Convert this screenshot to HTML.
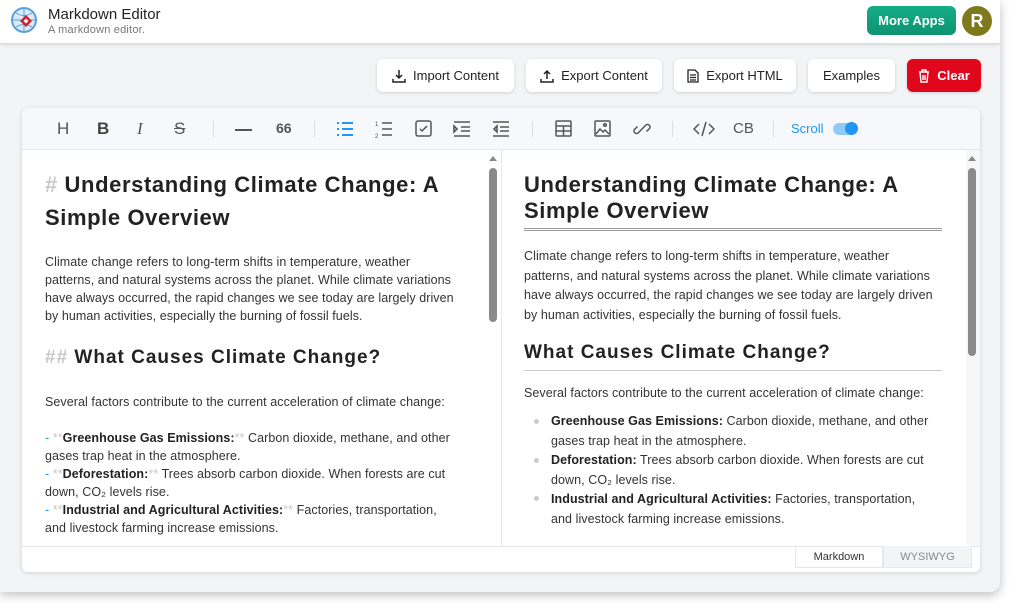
<!DOCTYPE html>
<html><head><meta charset="utf-8"><style>
*{box-sizing:border-box;margin:0;padding:0}
body{width:1024px;height:615px;background:#fff;font-family:"Liberation Sans",sans-serif;position:relative;overflow:hidden;color:#222}
.app{position:absolute;left:0;top:0;width:1000px;height:592px;background:#f3f4f6;border-radius:0 0 10px 0;box-shadow:0 3px 10px rgba(0,0,0,.25);overflow:hidden}
.hdr{position:absolute;left:0;top:0;width:1000px;height:43px;background:#fff;box-shadow:0 2px 3px rgba(0,0,0,.12)}
.a{position:absolute;white-space:nowrap}
.btn{position:absolute;top:59px;height:33px;background:#fff;border-radius:6px;box-shadow:0 1px 3px rgba(0,0,0,.15);font-size:13px;display:flex;align-items:center;justify-content:center;gap:7px;color:#222}
.card{position:absolute;left:22px;top:108px;width:958px;height:464px;background:#fff;border-radius:6px;box-shadow:0 1px 4px rgba(0,0,0,.15);overflow:hidden}
.tb{position:absolute;left:0;top:0;width:958px;height:42px;background:#f7f8fb;border-bottom:1px solid #e5e7eb}
.ic{position:absolute;top:12px}
.t{position:absolute;font-size:12.5px;letter-spacing:.07px;color:#333;white-space:nowrap;line-height:18px}
.h1{position:absolute;font-size:22px;letter-spacing:.6px;font-weight:bold;color:#222;white-space:nowrap}
.h2{position:absolute;font-size:19px;letter-spacing:1px;font-weight:bold;color:#222;white-space:nowrap}
.g{color:#c8c8c8}
b{color:#222}
.sep{position:absolute;top:13px;width:1px;height:16px;background:#ddd}
.bl{position:absolute;width:5px;height:5px;border-radius:50%;background:#ccc}
</style></head><body>
<div class="app">
<div class="hdr">
<svg class="a" style="left:10px;top:6px" width="28" height="28" viewBox="0 0 28 28"><circle cx="14" cy="14" r="13" fill="#5a9fd8"/><circle cx="14" cy="14" r="11" fill="#dbeaf8"/><path d="M3 14h22M14 3v22M6 7q8 5 16 0M6 21q8-5 16 0" stroke="#5a9fd8" fill="none"/><path d="M16 9l6 6-6 6-6-6z" fill="#d0202a"/><path d="M16 12.5l2.5 2.5-2.5 2.5-2.5-2.5z" fill="#fff"/></svg>
<div class="a" style="left:48px;top:6px;font-size:15px;color:#222">Markdown Editor</div>
<div class="a" style="left:48px;top:24px;font-size:11px;color:#777;letter-spacing:.2px">A markdown editor.</div>
<div class="a" style="left:867px;top:6px;width:89px;height:29px;border-radius:6px;color:#fff;font-size:13px;font-weight:bold;text-align:center;line-height:29px;background:linear-gradient(#13ad86,#0d9473)">More Apps</div>
<div class="a" style="left:962px;top:6px;width:30px;height:30px;border-radius:50%;background:#7e7a1c;color:#fff;font-size:18px;font-weight:bold;text-align:center;line-height:30px">R</div>
</div>
<div class="btn" style="left:377px;width:137px"><svg width="14" height="14" viewBox="0 0 14 14" fill="none" stroke="#222" stroke-width="1.5"><path d="M7 1v8M4 6l3 3 3-3M1 10v3h12v-3"/></svg>Import Content</div>
<div class="btn" style="left:526px;width:136px"><svg width="14" height="14" viewBox="0 0 14 14" fill="none" stroke="#222" stroke-width="1.5"><path d="M7 10V2M4 5l3-3 3 3M1 10v3h12v-3"/></svg>Export Content</div>
<div class="btn" style="left:674px;width:122px"><svg width="12" height="14" viewBox="0 0 12 14" fill="none" stroke="#222" stroke-width="1.3"><path d="M1 1h7l3 3v9H1zM3 6h6M3 8.5h6M3 11h6"/></svg>Export HTML</div>
<div class="btn" style="left:808px;width:87px">Examples</div>
<div class="btn" style="left:907px;width:74px;background:#e0061c;color:#fff;font-weight:bold"><svg width="12" height="14" viewBox="0 0 12 14" fill="none" stroke="#fff" stroke-width="1.4"><path d="M1 3h10M4 3V1h4v2M2 3l1 10h6l1-10M5 6v5M7 6v5"/></svg>Clear</div>
<div class="card">
<div class="tb">
<div class="a" style="left:35px;top:11px;font-size:17px;color:#555">H</div>
<div class="a" style="left:75px;top:11px;font-size:17px;font-weight:bold;color:#444">B</div>
<div class="a" style="left:115px;top:11px;font-size:17px;font-style:italic;color:#555;font-family:'Liberation Serif',serif">I</div>
<div class="a" style="left:152px;top:11px;font-size:17px;color:#555;text-decoration:line-through">S</div>
<div class="sep" style="left:191px"></div>
<div class="a" style="left:213px;top:21px;width:17px;height:2px;background:#555"></div>
<div class="a" style="left:254px;top:12px;font-size:14px;font-weight:bold;color:#555">66</div>
<div class="sep" style="left:292px"></div>
<svg class="ic" style="left:314px" width="18" height="18" viewBox="0 0 18 18" stroke="#2196f3" stroke-width="2"><path d="M6 3h11M6 9h11M6 15h11M1 3h2M1 9h2M1 15h2"/></svg>
<svg class="ic" style="left:353px" width="18" height="18" viewBox="0 0 18 18" stroke="#555" stroke-width="1.6"><path d="M7 3h10M7 9h10M7 15h10"/><text x="0" y="6" font-size="6" fill="#555" stroke="none">1</text><text x="0" y="18" font-size="6" fill="#555" stroke="none">2</text></svg>
<svg class="ic" style="left:393px" width="17" height="17" viewBox="0 0 17 17" fill="none" stroke="#555" stroke-width="1.5"><rect x="1" y="1" width="15" height="15" rx="2"/><path d="M5 9l2 2 5-5"/></svg>
<svg class="ic" style="left:431px" width="18" height="18" viewBox="0 0 18 18" fill="none" stroke="#555" stroke-width="1.6"><path d="M1 2h16M8 7h9M8 11h9M1 16h16M1 6l3 3-3 3z"/></svg>
<svg class="ic" style="left:470px" width="18" height="18" viewBox="0 0 18 18" fill="none" stroke="#555" stroke-width="1.6"><path d="M1 2h16M8 7h9M8 11h9M1 16h16M5 6L2 9l3 3z"/></svg>
<div class="sep" style="left:510px"></div>
<svg class="ic" style="left:533px" width="17" height="17" viewBox="0 0 17 17" fill="none" stroke="#555" stroke-width="1.5"><rect x="1" y="1" width="15" height="15" rx="1"/><path d="M1 6h15M1 11h15M8.5 6v10"/></svg>
<svg class="ic" style="left:572px" width="17" height="17" viewBox="0 0 17 17" fill="none" stroke="#555" stroke-width="1.5"><rect x="1" y="1" width="15" height="15" rx="1"/><path d="M2 14l4-5 3 3 2-2 4 4"/><circle cx="11" cy="5" r="1.3"/></svg>
<svg class="ic" style="left:611px" width="18" height="18" viewBox="0 0 18 18" fill="none" stroke="#555" stroke-width="1.5"><path d="M8 10l-3 3a2.5 2.5 0 0 1-3.5-3.5l3-3M10 8l3-3a2.5 2.5 0 0 1 3.5 3.5l-3 3M7 11l4-4"/></svg>
<div class="sep" style="left:650px"></div>
<svg class="ic" style="left:671px" width="22" height="18" viewBox="0 0 22 18" fill="none" stroke="#555" stroke-width="1.5"><path d="M6 4L1 9l5 5M16 4l5 5-5 5M13 2l-4 14"/></svg>
<div class="a" style="left:711px;top:12px;font-size:15px;color:#555">CB</div>
<div class="sep" style="left:751px"></div>
<div class="a" style="left:769px;top:13px;font-size:13px;color:#2196f3">Scroll</div>
<div class="a" style="left:811px;top:15px;width:24px;height:12px;border-radius:6px;background:#90caf9"></div>
<div class="a" style="left:823px;top:14px;width:13px;height:13px;border-radius:50%;background:#2196f3"></div>
</div>
<!-- left pane -->
<div class="a" style="left:479px;top:42px;width:1px;height:396px;background:#e5e7eb"></div>
<div class="a" style="left:467px;top:48px;width:0;height:0;border-left:4px solid transparent;border-right:4px solid transparent;border-bottom:5px solid #888"></div>
<div class="a" style="left:467px;top:60px;width:8px;height:154px;border-radius:4px;background:#8a8a8a"></div>
<div class="h1" style="left:23px;top:64px"><span class="g">#</span> Understanding Climate Change: A</div>
<div class="h1" style="left:23px;top:97px">Simple Overview</div>
<div class="t" style="left:23px;top:145px">Climate change refers to long-term shifts in temperature, weather</div>
<div class="t" style="left:23px;top:163px">patterns, and natural systems across the planet. While climate variations</div>
<div class="t" style="left:23px;top:181px">have always occurred, the rapid changes we see today are largely driven</div>
<div class="t" style="left:23px;top:199px">by human activities, especially the burning of fossil fuels.</div>
<div class="h2" style="left:23px;top:239px"><span class="g">##</span> What Causes Climate Change?</div>
<div class="t" style="left:23px;top:285px">Several factors contribute to the current acceleration of climate change:</div>
<div class="t" style="left:23px;top:321px"><span style="color:#2196f3">-</span> <span class="g">**</span><b>Greenhouse Gas Emissions:</b><span class="g">**</span> Carbon dioxide, methane, and other</div>
<div class="t" style="left:23px;top:339px">gases trap heat in the atmosphere.</div>
<div class="t" style="left:23px;top:357px"><span style="color:#2196f3">-</span> <span class="g">**</span><b>Deforestation:</b><span class="g">**</span> Trees absorb carbon dioxide. When forests are cut</div>
<div class="t" style="left:23px;top:375px">down, CO₂ levels rise.</div>
<div class="t" style="left:23px;top:393px"><span style="color:#2196f3">-</span> <span class="g">**</span><b>Industrial and Agricultural Activities:</b><span class="g">**</span> Factories, transportation,</div>
<div class="t" style="left:23px;top:411px">and livestock farming increase emissions.</div>
<!-- right pane -->
<div class="a" style="left:944px;top:42px;width:14px;height:396px;background:#f7f7f7"></div>
<div class="a" style="left:946px;top:48px;width:0;height:0;border-left:4px solid transparent;border-right:4px solid transparent;border-bottom:5px solid #888"></div>
<div class="a" style="left:946px;top:60px;width:8px;height:188px;border-radius:4px;background:#8a8a8a"></div>
<div class="h1" style="left:502px;top:64px">Understanding Climate Change: A</div>
<div class="h1" style="left:502px;top:90px">Simple Overview</div>
<div class="a" style="left:502px;top:120px;width:418px;height:3px;border-top:1px solid #999;border-bottom:1px solid #999"></div>
<div class="t" style="left:502px;top:139px;line-height:19.5px">Climate change refers to long-term shifts in temperature, weather<br>patterns, and natural systems across the planet. While climate variations<br>have always occurred, the rapid changes we see today are largely driven<br>by human activities, especially the burning of fossil fuels.</div>
<div class="h2" style="left:502px;top:234px">What Causes Climate Change?</div>
<div class="a" style="left:502px;top:262px;width:418px;height:1px;background:#ccc"></div>
<div class="t" style="left:502px;top:276px">Several factors contribute to the current acceleration of climate change:</div>
<div class="bl" style="left:512px;top:311px"></div>
<div class="bl" style="left:512px;top:350px"></div>
<div class="bl" style="left:512px;top:388px"></div>
<div class="t" style="left:529px;top:304px;line-height:19.5px"><b>Greenhouse Gas Emissions:</b> Carbon dioxide, methane, and other<br>gases trap heat in the atmosphere.<br><b>Deforestation:</b> Trees absorb carbon dioxide. When forests are cut<br>down, CO₂ levels rise.<br><b>Industrial and Agricultural Activities:</b> Factories, transportation,<br>and livestock farming increase emissions.</div>
<!-- footer -->
<div class="a" style="left:0;top:438px;width:958px;height:26px;background:#fff;border-top:1px solid #e5e7eb"></div>
<div class="a" style="left:773px;top:438px;width:88px;height:22px;border:1px solid #e5e7eb;border-top:none;font-size:11px;color:#333;text-align:center;line-height:22px">Markdown</div>
<div class="a" style="left:861px;top:438px;width:89px;height:22px;background:#f3f4f6;border:1px solid #e5e7eb;border-top:none;font-size:11px;color:#888;text-align:center;line-height:22px">WYSIWYG</div>
</div>
</div>
</body></html>
